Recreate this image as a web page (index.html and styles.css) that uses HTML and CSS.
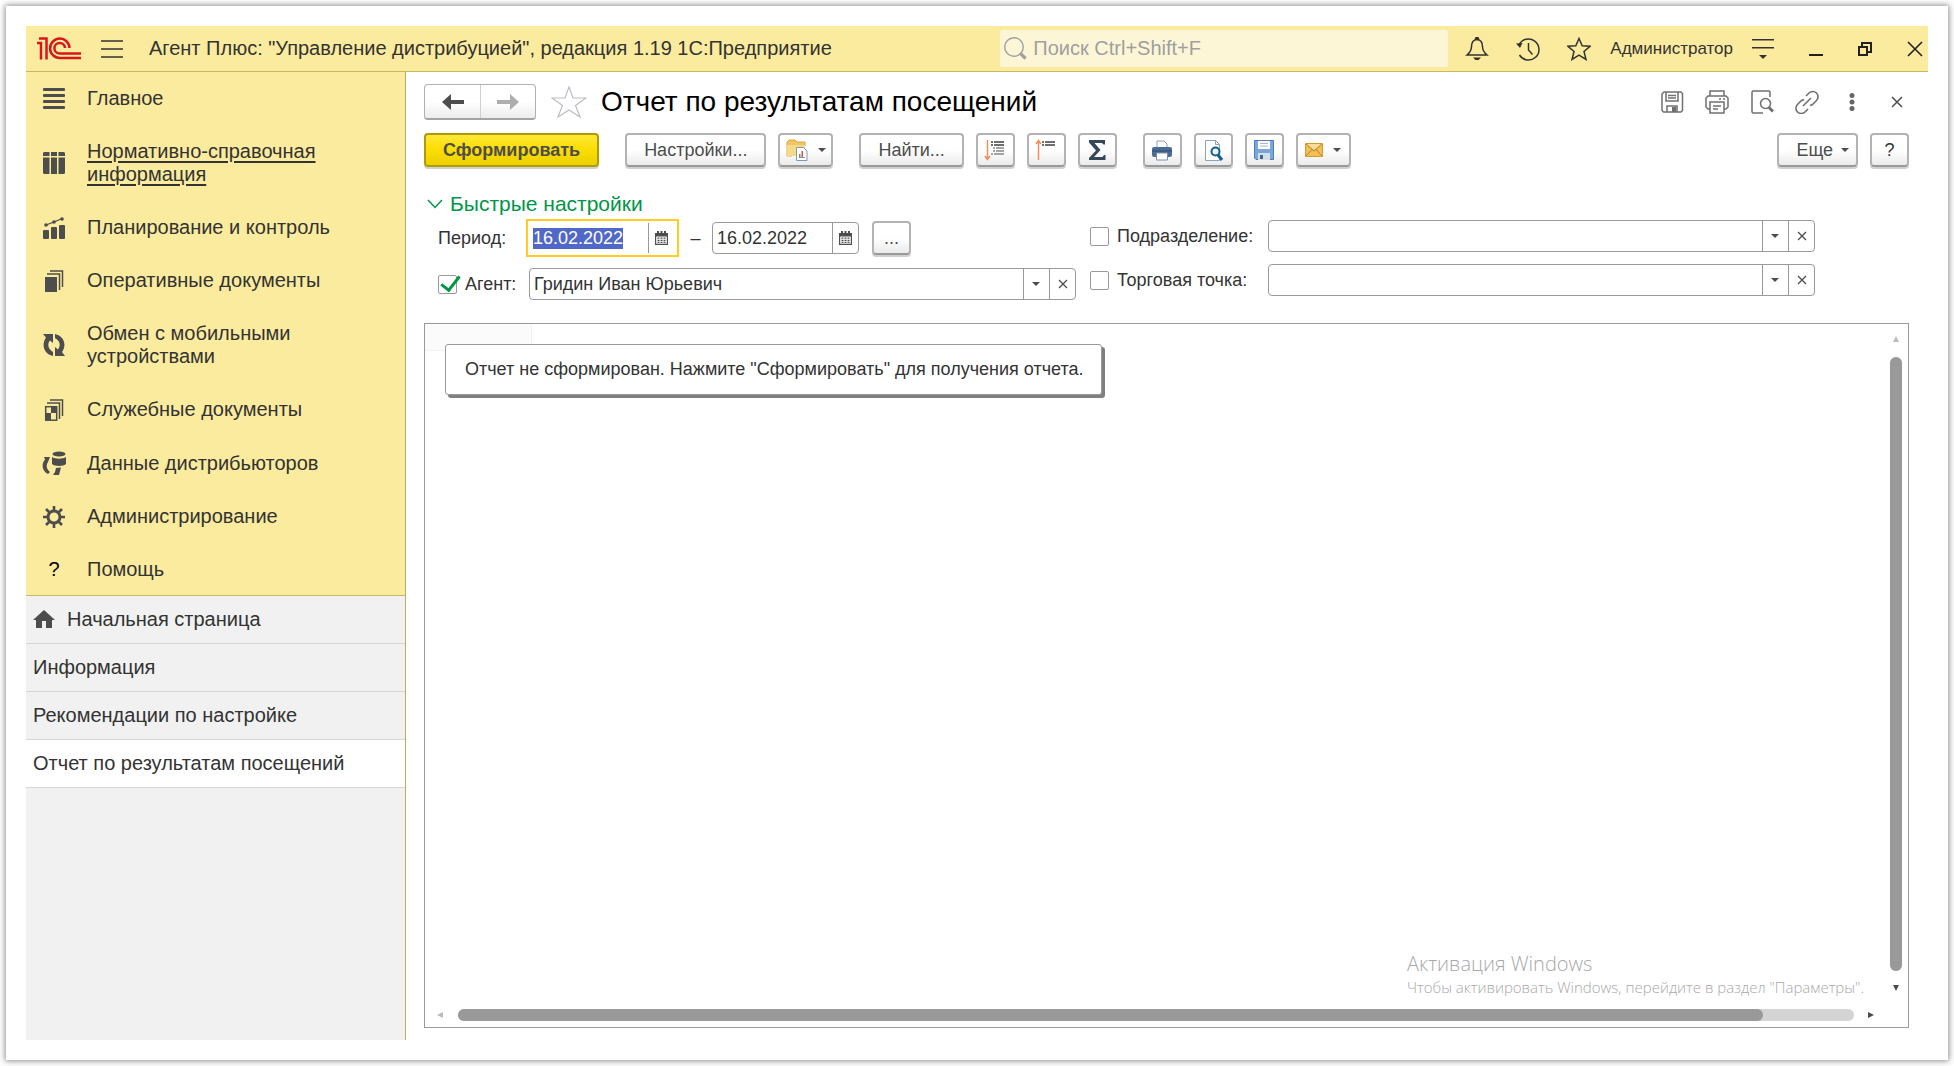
FILE: index.html
```html
<!DOCTYPE html>
<html lang="ru">
<head>
    <meta charset="UTF-8">
    <meta name="viewport" content="width=device-width, initial-scale=1.0">
    <title>Отчет по результатам посещений</title>
    <link rel="stylesheet" href="styles.css">
</head>
<body>
<div class="window">
    <header class="topbar">
        <svg class="logo" width="44" height="23" viewBox="0 0 44 23" fill="none" stroke="#d9161c" stroke-width="2.500">
            <path d="M0 6h4v16.500M2 1.500h7.500v21"/>
            <path d="M32.500 11a9.700 9.700 0 1 0-9.700 10H44"/>
            <path d="M28 11a5.300 5.300 0 1 0-5.300 5.500H44"/>
        </svg>
        <button class="icon-btn burger" aria-label="Меню">
            <svg width="22" height="18" viewBox="0 0 22 18" stroke="#333" stroke-width="1.4"><path d="M0 1h22M0 9h22M0 17h22"/></svg>
        </button>
        <div class="app-title">Агент Плюс: "Управление дистрибуцией", редакция 1.19 1С:Предприятие</div>
        <label class="search">
            <svg width="23" height="23" viewBox="0 0 23 23" fill="none" stroke="#9f9f9f"><circle cx="10" cy="10" r="9.3" stroke-width="1.4"/><path d="M16.500 16.500l5 5" stroke-width="3.200"/></svg>
            <input type="text" placeholder="Поиск Ctrl+Shift+F" aria-label="Поиск">
        </label>
        <div class="top-icons">
            <button class="icon-btn" aria-label="Уведомления">
                <svg width="24" height="24" viewBox="0 0 24 24" fill="none" stroke="#333" stroke-width="1.5"><path d="M12 2.500c-4 .5-5.500 3.500-5.500 7 0 4-1.500 6-4.500 8.500h20c-3-2.500-4.500-4.500-4.500-8.500 0-3.500-1.500-6.500-5.500-7z"/><path d="M10.500 2a1.500 1.500 0 0 1 3 0z" fill="#333"/><path d="M8 20.500h8l-2.500 2.500h-3z" fill="#333" stroke="none"/></svg>
            </button>
            <button class="icon-btn" aria-label="История">
                <svg width="24" height="24" viewBox="0 0 24 24" fill="none" stroke="#333" stroke-width="1.5"><path d="M3 8A10.500 10.500 0 1 1 3.500 18"/><path d="M12.500 6v7l4 4.500"/><path d="M0 6.500l6.500-.5-2.500 5z" fill="#333" stroke="none"/></svg>
            </button>
            <button class="icon-btn" aria-label="Избранное">
                <svg width="24" height="24" viewBox="0 0 24 24" fill="none" stroke="#333" stroke-width="1.5"><path d="M12 1.500l3.200 7.200 7.800.6-6 5.200 2 8-7-4.300-7 4.300 2-8-6-5.200 7.800-.6z"/></svg>
            </button>
        </div>
        <a class="user" href="#">Администратор</a>
        <div class="win-icons">
            <button class="icon-btn" aria-label="Настройка панели">
                <svg width="22" height="20" viewBox="0 0 22 20" fill="#333"><path d="M0 0h22v1.500H0zM0 8h22v1.500H0zM7 16h8l-4 4z"/></svg>
            </button>
            <button class="icon-btn" aria-label="Свернуть">
                <svg width="14" height="14" viewBox="0 0 14 14" fill="#222"><path d="M0 12h14v2H0z"/></svg>
            </button>
            <button class="icon-btn" aria-label="Восстановить">
                <svg width="14" height="14" viewBox="0 0 14 14" fill="none" stroke="#222" stroke-width="2"><path d="M1 5h8v8H1zM4 4V1h9v9H10"/></svg>
            </button>
            <button class="icon-btn" aria-label="Закрыть">
                <svg width="16" height="16" viewBox="0 0 16 16" stroke="#222" stroke-width="1.6"><path d="M1 1l14 14M15 1L1 15"/></svg>
            </button>
        </div>
    </header>

    <div class="body">
        <aside class="sidebar">
            <nav class="sections">
                <a href="#"><svg width="22" height="22" viewBox="0 0 22 22" fill="#4d4d4d"><rect y="0" width="22" height="3" rx="1"/><rect y="6" width="22" height="3" rx="1"/><rect y="12" width="22" height="3" rx="1"/><rect y="18" width="22" height="3" rx="1"/></svg><span>Главное</span></a>
                <a href="#" class="hover"><svg width="22" height="22" viewBox="0 0 22 22" fill="#4d4d4d"><path d="M1 0h5.500v4H0V1zM8 0h6v4H8zM15.500 0H21l1 1v3h-6.500zM0 5.500h6.500V22H1l-1-1zM8 5.500h6V22H8zM15.500 5.500H22V21l-1 1h-5.500z"/></svg><span>Нормативно-справочная информация</span></a>
                <a href="#"><svg width="22" height="22" viewBox="0 0 22 22" fill="#4d4d4d"><rect y="13" width="6" height="9" rx="1"/><rect x="8" y="10" width="6" height="12" rx="1"/><rect x="16" y="8" width="6" height="14" rx="1"/><path d="M3 8l8-3 8-3.500" stroke="#4d4d4d" stroke-width="1.300"/><circle cx="3" cy="8" r="1.800"/><circle cx="11" cy="5" r="1.800"/><circle cx="19" cy="2" r="1.800"/></svg><span>Планирование и контроль</span></a>
                <a href="#"><svg width="22" height="22" viewBox="0 0 22 22" fill="none" stroke="#4d4d4d" stroke-width="1.500"><rect x="2" y="7" width="12" height="15" fill="#4d4d4d" stroke="none"/><path d="M4 4h12.500v16M7 1h12.500v16"/></svg><span>Оперативные документы</span></a>
                <a href="#"><svg width="22" height="22" viewBox="0 0 22 22" fill="#4d4d4d"><path d="M0 0h10v9L7 6.500C4 10 5 15 10 18v4C1 20 -2 11 3 3.500zM12 0c9 2 12 11 7 18l3 4H12v-9l3 2.500C18 11 17 7 12 4z"/></svg><span>Обмен с мобильными устройствами</span></a>
                <a href="#"><svg width="22" height="22" viewBox="0 0 22 22" fill="none" stroke="#4d4d4d" stroke-width="1.500"><rect x="2.700" y="7.700" width="11" height="13.500"/><path d="M8 8h5v6H8zM3 14h5v7H3z" fill="#4d4d4d" stroke="none"/><path d="M4 4h12.500v16M7 1h12.500v16"/></svg><span>Служебные документы</span></a>
                <a href="#"><svg width="24" height="24" viewBox="0 0 24 24" fill="#4d4d4d"><ellipse cx="17" cy="3" rx="6.500" ry="2.500"/><path d="M10 6c3 2.200 11 2.200 14 0v7c-2 2.500-12 2.500-14 0zM2 6h6L6 11c-2 3-2 7 2 10l-2 2C0 20-1 13 3 8.500zM19 16.500l-2 7.500h-6l2-3 1-4z"/></svg><span>Данные дистрибьюторов</span></a>
                <a href="#"><svg width="22" height="22" viewBox="0 0 22 22" fill="none" stroke="#4d4d4d"><circle cx="11" cy="11" r="6" stroke-width="3"/><path d="M11 0v5M11 17v5M0 11h5M17 11h5M3 3l4 4M15 15l4 4M19 3l-4 4M7 15l-4 4" stroke-width="2.600"/></svg><span>Администрирование</span></a>
                <a href="#"><b>?</b><span>Помощь</span></a>
            </nav>
            <nav class="tabs">
                <a href="#"><svg width="22" height="19" viewBox="0 0 22 19" fill="#4d4d4d"><path d="M11 0l11 10h-3v8h-6v-7H9v7H3v-8H0z"/></svg>Начальная страница</a>
                <a href="#">Информация</a>
                <a href="#">Рекомендации по настройке</a>
                <a href="#" class="active">Отчет по результатам посещений</a>
            </nav>
        </aside>

        <main class="main">
            <div class="head">
                <div class="nav-btns">
                    <button aria-label="Назад"><svg width="22" height="16" viewBox="0 0 22 16" fill="#4d4d4d"><path d="M0 8l9-8v6h13v4H9v6z"/></svg></button>
                    <button aria-label="Вперед"><svg width="22" height="16" viewBox="0 0 22 16" fill="#adadad"><path d="M22 8l-9-8v6H0v4h13v6z"/></svg></button>
                </div>
                <button class="icon-btn star" aria-label="В избранное">
                    <svg width="36" height="34" viewBox="0 0 36 34" fill="none" stroke="#b9bec4" stroke-width="1.200"><path d="M18 2l4 11h13l-10.500 7.500L29 32l-11-7-11 7 4.500-11.500L1 13h13z"/></svg>
                </button>
                <h1>Отчет по результатам посещений</h1>
                <div class="head-icons">
                    <button class="icon-btn" aria-label="Сохранить"><svg width="24" height="24" viewBox="0 0 24 24" fill="none" stroke="#707070" stroke-width="1.500"><path d="M4 2h17l1.500 1.500v17L21 22H3.500L2 20.500V4z"/><path d="M6 2v9h12V2M8 5.500h8M8 8h8M7 22v-6h10v6"/><path d="M12 17h4v5h-4z" fill="#707070" stroke="none"/></svg></button>
                    <button class="icon-btn" aria-label="Печать"><svg width="24" height="24" viewBox="0 0 24 24" fill="none" stroke="#707070" stroke-width="1.500"><path d="M5 6V1h14v5M5 19H3l-2-2V8l2-2h18l2 2v9l-2 2h-2"/><path d="M5 12h14v11H5zM8 16h8M8 19h5M14 9h2M18 9h2"/></svg></button>
                    <button class="icon-btn" aria-label="Просмотр"><svg width="24" height="24" viewBox="0 0 24 24" fill="none" stroke="#707070" stroke-width="1.500"><path d="M13 23H3l-1-1V2l1-1h16l1 1v5"/><circle cx="15.500" cy="13.500" r="5"/><path d="M19 17.500l4 4" stroke-width="3"/></svg></button>
                    <button class="icon-btn" aria-label="Ссылка"><svg width="24" height="24" viewBox="0 0 24 24" fill="none" stroke="#707070" stroke-width="1.600"><path d="M11 6l3-3a5 5 0 0 1 7.500 7.500l-4 4-2.500 1M9 9.500l-2.500 1-4 4A5 5 0 0 0 10 22l3-3M8 16l8-8"/></svg></button>
                    <button class="icon-btn" aria-label="Еще"><svg width="24" height="24" viewBox="0 0 24 24" fill="#666"><circle cx="12" cy="5.500" r="2.500"/><circle cx="12" cy="12" r="2.500"/><circle cx="12" cy="18.500" r="2.500"/></svg></button>
                    <button class="icon-btn" aria-label="Закрыть"><svg width="24" height="24" viewBox="0 0 24 24" stroke="#4d4d4d" stroke-width="1.500"><path d="M7 7l10 10M17 7L7 17"/></svg></button>
                </div>
            </div>

            <div class="toolbar">
                <button class="btn primary">Сформировать</button>
                <div class="group">
                    <button class="btn">Настройки...</button>
                    <button class="btn drop" aria-label="Варианты отчета">
                        <svg width="22" height="22" viewBox="0 0 22 22"><path d="M1 17V3l2-2h6l2 2h8v4H8L6 17z" fill="#f0c668" stroke="#d9a53c"/><path d="M1 17V6h18v11z" fill="#f7d98c"/><path d="M10.500 8.500h7l3.500 3.500v9.500H10.500z" fill="#fff" stroke="#8097ad"/><path d="M13 18v-3h1.500v3z" fill="#5a9a5a"/><path d="M15.500 18v-6H17v6z" fill="#d9534f"/><path d="M13 18.500h6" stroke="#8097ad"/></svg>
                        <i class="caret"></i>
                    </button>
                </div>
                <div class="group">
                    <button class="btn">Найти...</button>
                    <button class="btn square" aria-label="Развернуть"><svg width="22" height="22" viewBox="0 0 22 22" fill="none" stroke="#404040"><path d="M3.500 1v19M1 17l2.500 3.500L6 17" stroke="#f58a56" stroke-width="1.400"/><path d="M7 3h2M10 3h10M7 6h2M10 6h10" stroke-width="1.600"/><path d="M9 9h2M12 9h8M9 12h2M12 12h8M7 15h2M10 15h10" stroke="#888" stroke-width="1.600"/></svg></button>
                    <button class="btn square" aria-label="Свернуть"><svg width="22" height="22" viewBox="0 0 22 22" fill="none" stroke="#404040"><path d="M3.500 21V2M1 5l2.500-3.500L6 5" stroke="#f58a56" stroke-width="1.400"/><path d="M7 3h2M10 3h10M7 6h2M10 6h10" stroke-width="1.600"/></svg></button>
                    <button class="btn square" aria-label="Сумма"><svg width="18" height="22" viewBox="0 0 18 22" fill="#36475a"><path d="M1 1h16v4.500h-1.500L14 4H6.500l6 7-6.500 7h8.500l1.500-2h1.500v5H1v-2l7-7.500-7-8z"/></svg></button>
                </div>
                <div class="group">
                    <button class="btn square" aria-label="Печать"><svg width="22" height="22" viewBox="0 0 22 22"><path d="M6 9V2h7l3 3v4z" fill="#fff" stroke="#8fa3b5"/><rect x="1" y="8" width="20" height="10" rx="2" fill="#4b6d94"/><path d="M1 12h20" stroke="#2f4d70"/><path d="M5.500 14h11v7h-11z" fill="#fff" stroke="#7b90a6"/></svg></button>
                    <button class="btn square" aria-label="Предварительный просмотр"><svg width="22" height="22" viewBox="0 0 22 22" fill="none"><path d="M3.500 1.500h10l4 4v16h-14z" fill="#fff" stroke="#8fa3b5"/><path d="M13.500 1.500v4h4" stroke="#8fa3b5"/><circle cx="13.500" cy="12.500" r="4" stroke="#15608f" stroke-width="2" fill="#e8f4fb"/><path d="M16 16l4 5" stroke="#15608f" stroke-width="3"/></svg></button>
                    <button class="btn square" aria-label="Сохранить"><svg width="22" height="22" viewBox="0 0 22 22"><path d="M1.500 1.500h19v19H3l-1.500-1.500z" fill="#78a7da" stroke="#4f7db5"/><path d="M5 2h12v8H5z" fill="#fff"/><path d="M7 4.500h8M7 7h8" stroke="#9eb9d6"/><path d="M5 14h12v7H5z" fill="#d5dde5"/><path d="M7 16h3v4H7z" fill="#3f648e"/></svg></button>
                    <button class="btn drop" aria-label="Отправить"><svg width="18" height="14" viewBox="0 0 18 14" fill="none"><path d="M.5.5h17v13H.5z" fill="#f0bf58" stroke="#d69a35"/><path d="M1 1l8 7 8-7M1 13l6-6.500M17 13l-6-6.500" stroke="#b97f1e"/><path d="M2 1l7 6 7-6z" fill="#f8dc9a"/></svg><i class="caret"></i></button>
                </div>
                <div class="group end">
                    <button class="btn more">Еще<i class="caret"></i></button>
                    <button class="btn square help">?</button>
                </div>
            </div>

            <button class="quick"><svg width="16" height="10" viewBox="0 0 16 10" fill="none" stroke="#009646" stroke-width="1.500"><path d="M1 1l7 7.500L15 1"/></svg>Быстрые настройки</button>

            <form class="filters">
                <div class="col">
                    <div class="row">
                        <label class="cap" for="from">Период:</label>
                        <div class="field date focus"><input type="text" id="from" value="16.02.2022"><button type="button" aria-label="Календарь"><svg width="13" height="14" viewBox="0 0 13 14"><use href="#cal"/></svg></button></div>
                        <span class="dash">–</span>
                        <div class="field date"><input type="text" value="16.02.2022" aria-label="Период по"><button type="button" aria-label="Календарь"><svg width="13" height="14" viewBox="0 0 13 14"><path id="cal" fill="#4d4d4d" fill-rule="evenodd" d="M0 2h2V0h2v2h1.500V0h2v2H9V0h2v2h2v12H0zM1.200 5.500v7.300h10.600V5.500zM2.500 6.500h2v1.300h-2zM5.500 6.500h2v1.300h-2zM8.500 6.500h2v1.300h-2zM2.500 8.700h2V10h-2zM5.500 8.700h2V10h-2zM8.500 8.700h2V10h-2zM2.500 10.800h2v1.300h-2zM5.500 10.800h2v1.300h-2zM8.500 10.800h2v1.300h-2z"/></svg></button></div>
                        <button type="button" class="btn square dots">...</button>
                    </div>
                    <div class="row">
                        <label class="cap"><input type="checkbox" checked>Агент:</label>
                        <div class="field">
                            <div class="pick"><select aria-label="Агент"><option>Гридин Иван Юрьевич</option></select><i class="caret"></i></div>
                            <button type="button" aria-label="Очистить"><svg width="10" height="10" viewBox="0 0 10 10" stroke="#4d4d4d" stroke-width="1.300"><path d="M1 1l8 8M9 1L1 9"/></svg></button>
                        </div>
                    </div>
                </div>
                <div class="col right">
                    <div class="row">
                        <label class="cap"><input type="checkbox">Подразделение:</label>
                        <div class="field">
                            <div class="pick"><select aria-label="Подразделение"><option></option></select><i class="caret"></i></div>
                            <button type="button" aria-label="Очистить"><svg width="10" height="10" viewBox="0 0 10 10" stroke="#4d4d4d" stroke-width="1.300"><path d="M1 1l8 8M9 1L1 9"/></svg></button>
                        </div>
                    </div>
                    <div class="row">
                        <label class="cap"><input type="checkbox">Торговая точка:</label>
                        <div class="field">
                            <div class="pick"><select aria-label="Торговая точка"><option></option></select><i class="caret"></i></div>
                            <button type="button" aria-label="Очистить"><svg width="10" height="10" viewBox="0 0 10 10" stroke="#4d4d4d" stroke-width="1.300"><path d="M1 1l8 8M9 1L1 9"/></svg></button>
                        </div>
                    </div>
                </div>
            </form>

            <section class="report">
                <div class="sheet">
                    <div class="cell"></div>
                    <div class="message">Отчет не сформирован. Нажмите "Сформировать" для получения отчета.</div>
                    <div class="watermark">
                        <p>Активация Windows</p>
                        <small>Чтобы активировать Windows, перейдите в раздел "Параметры".</small>
                    </div>
                </div>
                <div class="vbar"><i class="arrow up"></i><div class="track"><div class="thumb"></div></div><i class="arrow down"></i></div>
                <div class="hbar"><i class="arrow left"></i><div class="track"><div class="thumb"></div></div><i class="arrow next"></i></div>
            </section>
        </main>
    </div>
</div>
<script>
    // start with the first date ready to be typed over
    const from = document.getElementById('from');
    from.focus();
    from.select();
</script>
</body>
</html>
```

FILE: styles.css
```css
* {
    box-sizing: border-box;
}
body, html {
    margin: 0;
    height: 100%;
}
body {
    padding: 6px;
    background: #fff;
    font-family: "Liberation Sans", Arial, sans-serif;
    font-size: 18px;
    color: #333;
}
a {
    color: inherit;
    text-decoration: none;
}
button, input, select {
    font: inherit;
    color: inherit;
    margin: 0;
}
button {
    padding: 0;
    border: none;
    background: none;
    display: flex;
    align-items: center;
    justify-content: center;
}
svg {
    display: block;
    flex: none;
}
.window {
    height: 100%;
    padding: 20px;
    background: #fff;
    box-shadow: 0 0 6px 1px rgba(0, 0, 0, 0.45);
    display: flex;
    flex-direction: column;
}

/* title bar */
.topbar {
    flex: none;
    height: 46px;
    display: flex;
    align-items: center;
    padding: 0 5px 0 11px;
    background: #fbeb9e;
    border-bottom: 1px solid #c9ba62;
}
.burger {
    margin: 0 26px 0 20px;
}
.app-title {
    font-size: 20px;
    white-space: nowrap;
}
.search {
    flex: 0 1 448px;
    height: 37px;
    margin-left: auto;
    padding: 0 4px;
    display: flex;
    align-items: center;
    gap: 6px;
    background: #fdf6d6;
    border-radius: 3px;
}
.search input {
    flex: 1;
    min-width: 0;
    padding: 0;
    border: none;
    outline: none;
    background: none;
    font-size: 20px;
}
.search input::placeholder {
    color: #9f9f9f;
}
.top-icons {
    display: flex;
    gap: 27px;
    margin-left: 17px;
}
.user {
    margin: 0 19px;
    font-size: 17px;
}
.win-icons {
    display: flex;
    align-items: center;
    gap: 35px;
}

.body {
    flex: 1;
    min-height: 0;
    display: flex;
}

/* sections and open windows */
.sidebar {
    flex: none;
    width: 380px;
    background: #f1f1f1;
    border-right: 1px solid #b9ad63;
    font-size: 20px;
    line-height: 23px;
}
.sections {
    background: #fbeb9e;
    border-bottom: 1px solid #c9ba62;
}
.sections a {
    display: grid;
    grid-template-columns: 22px 1fr;
    gap: 22px;
    align-items: center;
    padding: 15px 50px 15px 17px;
}
.sections svg, .sections b {
    justify-self: center;
}
.sections b {
    color: #000;
    font-weight: normal;
}
.sections a:last-child {
    padding-bottom: 14px;
}
.hover {
    text-decoration: underline;
    text-underline-offset: 3px;
}
.tabs a {
    display: flex;
    align-items: center;
    gap: 12px;
    height: 48px;
    padding: 0 7px;
    border-bottom: 1px solid #d6d6d6;
}
.tabs .active {
    background: #fff;
}

/* form */
.main {
    flex: 1;
    min-width: 0;
    display: flex;
    flex-direction: column;
    padding: 12px 19px 12px 18px;
}
.head {
    display: flex;
    align-items: center;
}
.nav-btns {
    display: flex;
    height: 36px;
    border: 1px solid #b0b0b0;
    border-bottom: 2px solid #a3a3a3;
    border-radius: 4px;
    background: linear-gradient(#fff 50%, #ececec);
}
.nav-btns button {
    width: 55px;
}
.nav-btns button + button {
    border-left: 1px solid #d0d0d0;
}
.star {
    margin: 0 14px 0 15px;
}
h1 {
    margin: 0;
    font-size: 28px;
    line-height: 36px;
    font-weight: normal;
    color: #000;
    white-space: nowrap;
}
.head-icons {
    display: flex;
    gap: 21px;
    margin-left: auto;
}
.toolbar {
    display: flex;
    gap: 26px;
    margin-top: 13px;
}
.group {
    display: flex;
    gap: 12px;
}
.end {
    margin-left: auto;
}
.btn {
    height: 34px;
    padding: 0 17px;
    border: 2px solid #b3b3b3;
    border-bottom-color: #999;
    border-radius: 4px;
    background: linear-gradient(#fff 50%, #ebebeb);
    box-shadow: 0 2px 0 #d0d0d0;
    color: #4d4d4d;
    white-space: nowrap;
}
.primary {
    border-color: #b09a05;
    background: linear-gradient(#ffe838, #fbdd00 50%, #ecd000);
    font-weight: bold;
}
.square {
    width: 39px;
    padding: 0;
}
.drop {
    width: 55px;
    padding: 0;
    gap: 10px;
}
.more {
    padding: 0 7px 0 17px;
    gap: 8px;
}
.help {
    color: #333;
}
.caret {
    border: 4px solid transparent;
    border-top-color: #4d4d4d;
    border-bottom: none;
}
.quick {
    align-self: flex-start;
    gap: 7px;
    margin: 24px 0 0 3px;
    font-size: 21px;
    line-height: 25px;
    color: #009646;
}

/* quick settings */
.filters {
    display: flex;
    align-items: flex-start;
    gap: 14px;
    padding: 3px 0 0 14px;
}
.col {
    display: grid;
    gap: 11px;
}
.row {
    display: flex;
    align-items: center;
}
.right {
    gap: 12px;
    padding-top: 1px;
}
.cap {
    flex: none;
    display: flex;
    align-items: center;
    gap: 8px;
    width: 91px;
}
.right .cap {
    width: 178px;
}
.filters input[type="checkbox"] {
    appearance: none;
    width: 19px;
    height: 19px;
    border: 1px solid #999;
    border-radius: 2px;
    background: #fff;
}
.filters input[type="checkbox"]:checked::after {
    content: "";
    display: block;
    width: 8px;
    height: 16px;
    margin: -4px 0 0 6px;
    border: solid #009646;
    border-width: 0 3px 3px 0;
    transform: rotate(38deg);
}
.field {
    width: 547px;
    height: 32px;
    display: flex;
    border: 1px solid #999;
    border-radius: 4px;
    background: #fff;
}
.field input, .field select {
    flex: 1;
    min-width: 0;
    width: 100%;
    padding: 0 4px;
    border: none;
    outline: none;
    background: none;
    appearance: none;
}
.field button {
    flex: none;
    width: 26px;
    border-left: 1px solid #999;
}
.pick {
    flex: 1;
    position: relative;
    display: flex;
}
.pick .caret {
    position: absolute;
    right: 9px;
    top: 13px;
    pointer-events: none;
}
.pick::after {
    content: "";
    position: absolute;
    right: 25px;
    top: 0;
    bottom: 0;
    border-left: 1px solid #999;
}
.date {
    width: 147px;
}
.focus {
    width: 153px;
    height: 38px;
    margin-left: -3px;
    border: 2px solid #fc2;
    border-radius: 0;
    padding: 2px 3px 2px 1px;
}
.focus input::selection {
    background: #5068c8;
    color: #fff;
}
.dash {
    width: 33px;
    text-align: center;
}
.dots {
    margin-left: 13px;
}

/* report */
.report {
    flex: 1;
    min-height: 0;
    margin-top: 23px;
    border: 1px solid #999;
    display: grid;
    grid-template: 1fr 24px / 1fr 24px;
}
.sheet {
    position: relative;
}
.cell {
    width: 107px;
    height: 27px;
    background: #fbfbfb;
    border: solid #f3f3f3;
    border-width: 0 1px 1px 0;
}
.message {
    position: absolute;
    left: 20px;
    top: 20px;
    padding: 14px 18px 14px 19px;
    line-height: 21px;
    border: 1px solid #999;
    border-radius: 3px;
    background: #fff;
    box-shadow: 3px 3px 0 #808080;
    white-space: nowrap;
}
.watermark {
    position: absolute;
    right: 20px;
    bottom: 5px;
    font-family: "Open Sans", "Noto Sans", sans-serif;
    font-weight: 300;
    color: #a8a8a8;
}
.watermark p {
    margin: 0;
    font-size: 20px;
    line-height: 24px;
}
.watermark small {
    display: block;
    font-size: 15px;
    line-height: 22px;
}
.vbar, .hbar {
    display: flex;
    align-items: center;
}
.vbar {
    flex-direction: column;
    padding: 12px 0 12px;
}
.hbar {
    padding: 0 10px 0 12px;
}
.track {
    flex: 1;
    border-radius: 6px;
    background: #d4d4d4;
}
.vbar .track {
    width: 12px;
    margin: 15px 0 14px;
}
.hbar .track {
    height: 12px;
    margin: 0 14px 0 15px;
}
.thumb {
    height: 100%;
    border-radius: 6px;
    background: #999;
}
.hbar .thumb {
    width: 93.5%;
}
.arrow {
    border: 3px solid transparent;
}
.up {
    border-top: none;
    border-bottom: 6px solid #bbb;
}
.down {
    border-bottom: none;
    border-top: 6px solid #4d4d4d;
}
.left {
    border-left: none;
    border-right: 6px solid #bbb;
}
.next {
    border-right: none;
    border-left: 6px solid #4d4d4d;
}
```
